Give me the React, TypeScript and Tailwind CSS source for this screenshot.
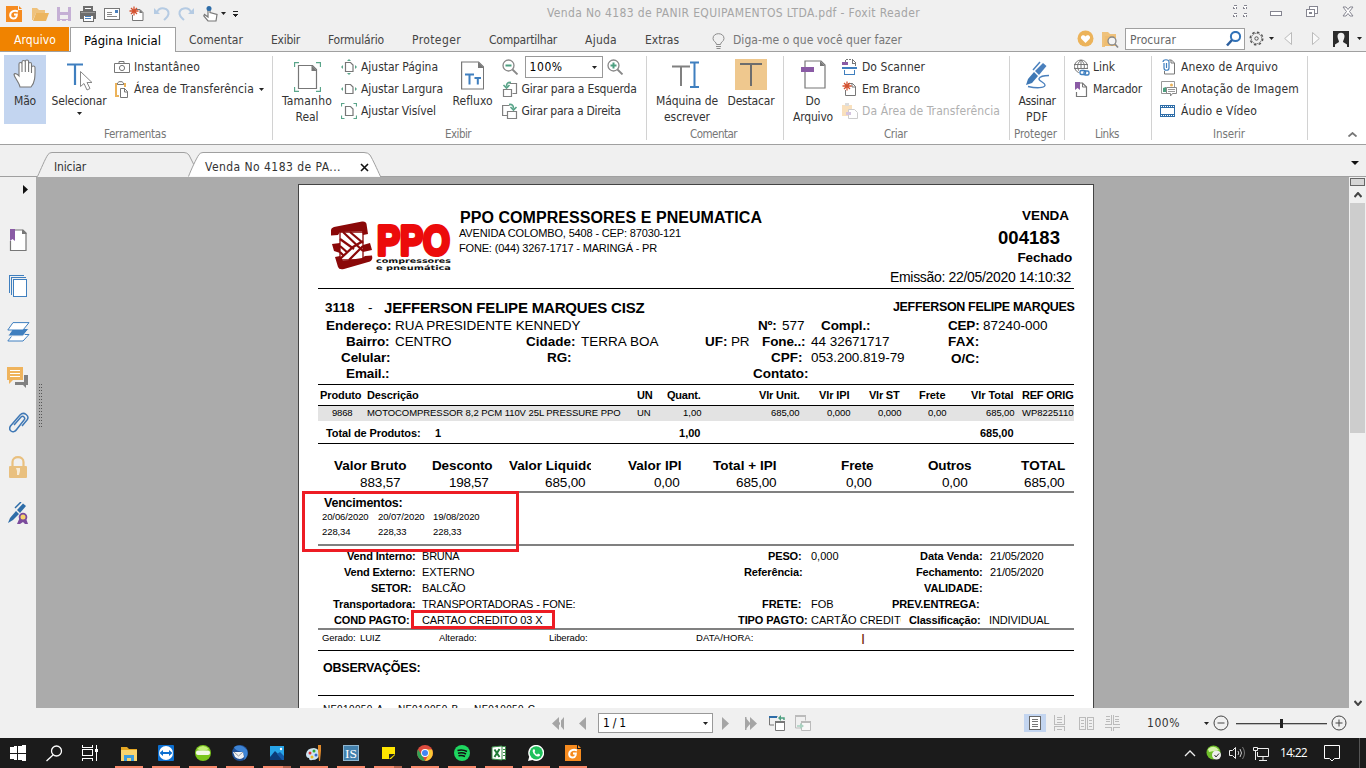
import { useLayoutEffect, useRef, useState, type ReactNode } from "react";

const UI = "font-['DejaVu_Sans_Condensed','Noto_Sans',sans-serif]";

/* Text whose tracking is adjusted so that it fills the given width. */
function T({ w, className = "", children }: { w: number; className?: string; children: string }) {
  const ref = useRef<HTMLSpanElement>(null);
  const [tracking, setTracking] = useState(0);
  useLayoutEffect(() => {
    if (ref.current && children.length > 1) {
      setTracking((w - ref.current.getBoundingClientRect().width) / children.length);
    }
  }, []);
  return (
    <span className={`block shrink-0 whitespace-pre ${className}`} style={{ width: w }}>
      <span ref={ref} style={{ letterSpacing: tracking }}>{children}</span>
    </span>
  );
}

type Field = [left: number, right: number, text: string, className?: string];

/* One printed line of the report; left and right are measured on the sheet. */
function Line({ className = "", fields }: { className?: string; fields: Field[] }) {
  let cursor = 0;
  return (
    <div className={`flex shrink-0 ${className}`}>
      {fields.map(([l, r, text, c = ""], i) => {
        const gap = l - cursor;
        cursor = r + 0.5;
        const clip = c.includes("overflow-hidden");
        return (
          <div key={i} className={`shrink-0 whitespace-pre ${c}`} style={{ marginLeft: gap, width: r - l + 0.5 }}>
            {clip ? text : <T w={r - l + 0.5}>{text}</T>}
          </div>
        );
      })}
    </div>
  );
}

const Rule = ({ className = "h-px bg-black" }: { className?: string }) => (
  <div className={`ml-[19px] w-[756px] shrink-0 ${className}`} />
);

function Svg({ w, h, className = "", children, crisp = false }: { w: number; h: number; className?: string; children: ReactNode; crisp?: boolean }) {
  return (
    <svg width={w} height={h} viewBox={`0 0 ${w} ${h}`} fill="none" className={`block shrink-0 ${className}`} shapeRendering={crisp ? "crispEdges" : undefined}>
      {children}
    </svg>
  );
}

const Caret = ({ className = "", c = "#222" }: { className?: string; c?: string }) => (
  <Svg w={5} h={3} className={className}><path d="M0 0h5L2.500 3z" fill={c} /></Svg>
);

const FoxitIcon = ({ className = "" }: { className?: string }) => (
  <Svg w={16} h={17} className={className}>
    <path d="M0 1h12v4h4v12H0z" fill="#f68b1f" />
    <path d="M13 1l3 3h-3z" fill="#f68b1f" />
    <path d="M12 6.500C8 4.500 4 7 4.200 10.500C4.500 14 9.500 14.500 10.500 11.500L10.800 9.500H8" stroke="#fff" strokeWidth="2" />
  </Svg>
);

const Star = ({ x, y }: { x: number; y: number }) => (
  <path transform={`translate(${x} ${y})`} d="M0-4.500V4.500M-4.500 0H4.500M-3-3L3 3M3-3L-3 3" stroke="#d4512f" strokeWidth="1.300" />
);

/* ---------- title bar ---------- */

function TitleBar() {
  return (
    <div className="flex h-[27px] shrink-0 items-center">
      <FoxitIcon className="ml-1.5" />
      <Svg w={17} h={16} className="ml-2.5">
        <path d="M0 2h5l2 2h6v3H4L1 14H0z" fill="#efc27c" /><path d="M4 7h13l-3 8H1z" fill="#ecb55f" />
      </Svg>
      <Svg w={14} h={14} className="ml-2" crisp>
        <path d="M0 0h14v14H0z" fill="#c5b0d5" /><path d="M3 0h8v5H3zM3 8h8v4H3z" fill="#f0f0f0" /><path d="M3 13h2v1H3zM9 13h2v1H9z" fill="#f0f0f0" />
      </Svg>
      <Svg w={16} h={16} className="ml-[9px]" crisp>
        <path d="M4 1h8v3H4z" fill="#fff" stroke="#6d6d6d" strokeWidth="2" /><path d="M0 5h16v8H0z" fill="#6d6d6d" /><path d="M1 6h14v1H1z" fill="#9a9a9a" /><path d="M3 9h10v6H3z" fill="#fff" stroke="#6d6d6d" /><path d="M5 10h6v1H5zM5 12h6v1H5z" fill="#4a80bd" />
      </Svg>
      <Svg w={16} h={12} className="ml-2" crisp>
        <path d="M.5.5h15v11H.5z" fill="#fff" stroke="#777" /><path d="M11 2h3v3h-3z" fill="#4a80bd" /><path d="M3 4.500h5M3 6.500h5M3 8.500h10" stroke="#888" />
      </Svg>
      <Svg w={15} h={16} className="ml-[9px]">
        <path d="M5 3.500h6l3 3v8H3.500V9" fill="#fff" stroke="#777" /><path d="M10.500 3v4H14z" fill="#777" /><Star x={5} y={5} />
      </Svg>
      <Svg w={16} h={15} className="ml-2.5">
        <path d="M3 6C6 0 15 2 14.500 8C14 11 12 12 10 14" stroke="#b5cbe3" strokeWidth="2" /><path d="M0 2v6h6z" fill="#b5cbe3" />
      </Svg>
      <Svg w={16} h={15} className="ml-2">
        <path d="M13 6C10 0 1 2 1.500 8C2 11 4 12 6 14" stroke="#b5cbe3" strokeWidth="2" /><path d="M16 2v6h-6z" fill="#b5cbe3" />
      </Svg>
      <Svg w={15} h={16} className="ml-[9px]">
        <path d="M5 11L1.500 8.500L.8 10L5 15h8l1-6.500l-7-2V3H5z" fill="#fff" stroke="#777" strokeWidth="1.200" /><circle cx="6" cy="2.500" r="2.500" fill="#2e6da8" />
      </Svg>
      <Caret className="ml-[3px]" />
      <Svg w={5} h={6} className="ml-[7px]" crisp><path d="M0 0h5v1H0zM0 3h5L2.500 6z" fill="#222" /></Svg>
      <T w={373} className="ml-[309px] text-xs leading-[27px] text-[#a5a5a5]">Venda No 4183 de PANIR EQUIPAMENTOS LTDA.pdf - Foxit Reader</T>
      <Svg w={14} h={14} className="ml-[313px] -mt-1" crisp>
        <g stroke="#858590"><path d="M.5.5h3v3h-3zM10.500.5h3v3h-3zM.5 8.500h3v3h-3zM10.500 8.500h3v3h-3z" fill="#fff" strokeDasharray="3 1" /></g>
      </Svg>
      <Svg w={12} h={5} className="ml-[23px]" crisp><path d="M.5.5h11v4H.5z" fill="#fff" stroke="#858590" /></Svg>
      <Svg w={12} h={12} className="ml-6 -mt-1" crisp>
        <path d="M3.500.5h8v7h-8z" fill="#fff" stroke="#858590" /><path d="M.5 3.500h8v7h-8zM3.500 6.500h2v1h-2z" fill="#fff" stroke="#858590" />
      </Svg>
      <Svg w={12} h={11} className="ml-6 -mt-1"><path d="M1 1h3l2 2.500L8 1h3L7.500 5.500L11 10H8L6 7.500L4 10H1l3.500-4.500z" fill="#fff" stroke="#858590" /></Svg>
    </div>
  );
}

function MenuBar() {
  const m = "text-xs leading-[27px] text-[#444]";
  return (
    <div className="flex h-[25px] shrink-0 border-b border-[#a0a0a0]">
      <div className="h-6 w-[69px] shrink-0 bg-[#f08300] pl-3.5">
        <T w={42} className="text-xs leading-[27px] text-white">Arquivo</T>
      </div>
      <div className="ml-px h-[25px] w-[106px] shrink-0 border border-b-0 border-[#a0a0a0] bg-white pl-[13px]">
        <T w={77} className="text-[13px] leading-[26px] text-black">Página Inicial</T>
      </div>
      <T w={54} className={`ml-[13px] ${m}`}>Comentar</T>
      <T w={29} className={`ml-7 ${m}`}>Exibir</T>
      <T w={56} className={`ml-7 ${m}`}>Formulário</T>
      <T w={49} className={`ml-7 ${m}`}>Proteger</T>
      <T w={68} className={`ml-7 ${m}`}>Compartilhar</T>
      <T w={32} className={`ml-7 ${m}`}>Ajuda</T>
      <T w={34} className={`ml-7 ${m}`}>Extras</T>
      <Svg w={13} h={16} className="ml-[33px] mt-[6px]">
        <path d="M4.500 11.500C4.500 9 1 8.500 1 5.500C1 2 4 .7 6.500.7S12 2 12 5.500C12 8.500 8.500 9 8.500 11.500zM4 13.500h5M4.500 15.500h4" stroke="#8c8c8c" />
      </Svg>
      <T w={169} className="ml-2 text-xs leading-[27px] text-[#777]">Diga-me o que você quer fazer</T>
      <Svg w={17} h={17} className="ml-[175px] mt-[3px]">
        <circle cx="8.500" cy="8.500" r="8" fill="#ecb35a" /><path d="M8.500 13L4.500 9C2.500 6 6.500 3.500 8.500 6.500C10.500 3.500 14.500 6 12.500 9z" fill="#fff" />
      </Svg>
      <Svg w={17} h={16} className="ml-2 mt-[5px]">
        <path d="M0 0h6l2 2h6v4H3v9H0z" fill="#efc27c" /><path d="M3 4h11v10H2z" fill="#efbd70" /><circle cx="10" cy="9" r="4" fill="#f4f4f4" stroke="#888" strokeWidth="1.300" /><path d="M13 12l3 3.500" stroke="#888" strokeWidth="1.600" />
      </Svg>
      <div className="ml-[6px] mt-px flex h-[22px] w-[120px] shrink-0 border border-[#a0a0a0] bg-white">
        <T w={46} className="ml-1 text-xs leading-[22px] text-[#666]">Procurar</T>
        <Svg w={16} h={16} className="ml-[50px] mt-[2px]">
          <circle cx="9.500" cy="5.500" r="4.600" stroke="#3273b8" strokeWidth="2" /><path d="M6 9L1 14.500" stroke="#2c5f9e" strokeWidth="2.600" />
        </Svg>
      </div>
      <Svg w={15} h={15} className="ml-1 mt-[4px]">
        <circle cx="7.500" cy="7.500" r="6.300" stroke="#555" strokeWidth="1.400" strokeDasharray="2.500 2.400" /><circle cx="7.500" cy="7.500" r="5.200" fill="#f0f0f0" stroke="#666" strokeDasharray="1.500 .5" /><circle cx="7.500" cy="7.500" r="1.700" stroke="#555" />
      </Svg>
      <Caret className="ml-[5px] mt-[10px]" />
      <Svg w={8} h={13} className="ml-2.5 mt-[5px]"><path d="M7.500.5v12L.7 6.500z" fill="#fafafa" stroke="#bbb" /></Svg>
      <Svg w={8} h={13} className="ml-5 mt-[5px]"><path d="M.5.5v12l6.800-6z" fill="#fafafa" stroke="#bbb" /></Svg>
      <Svg w={16} h={16} className="ml-[13px] mt-1">
        <path d="M0 0h16v16H0z" fill="#2b2b2b" /><path d="M4.500 5C4.500.5 11.500.5 11.500 5C11.500 8 10 9 10 11L14 13.500V16H2V13.500L6 11C6 9 4.500 8 4.500 5z" fill="#f0f0f0" />
      </Svg>
      <Caret className="ml-2 mt-[10px]" />
    </div>
  );
}

/* ---------- ribbon ---------- */

function Group({ className, label, lw, lc, children }: { className: string; label: string; lw: number; lc: string; children: ReactNode }) {
  return (
    <div className={`mt-1 flex h-[84px] shrink-0 flex-col border-r border-[#d2d2d2] ${className}`}>
      <div className="flex h-[70px] shrink-0">{children}</div>
      <T w={lw} className={`text-[11.500px] leading-[16px] text-[#777] ${lc}`}>{label}</T>
    </div>
  );
}

function Big({ className, icon, lines }: { className: string; icon: ReactNode; lines: [string, number][] }) {
  return (
    <div className={`flex shrink-0 flex-col items-center ${className}`}>
      <div className="flex h-[37px] shrink-0 items-center justify-center">{icon}</div>
      {lines.map(([t, w]) => <T key={t} w={w} className="text-xs leading-4 text-[#333]">{t}</T>)}
    </div>
  );
}

function Small({ icon, label, w, dim = false, caret = false }: { icon: ReactNode; label: string; w: number; dim?: boolean; caret?: boolean }) {
  return (
    <div className="flex h-[22px] shrink-0 items-center">
      <div className="flex w-5 shrink-0 items-center">{icon}</div>
      <T w={w} className={`text-xs leading-[22px] ${dim ? "text-[#b0b0b0]" : "text-[#333]"}`}>{label}</T>
      {caret && <Caret className="ml-[5px]" />}
    </div>
  );
}

const FitPage = ({ v, h, diag }: { v?: boolean; h?: boolean; diag?: boolean }) => (
  <Svg w={16} h={16}>
    <path d="M4.500 3.500h5l2.500 2.500v6.500H4.500z" fill="#fff" stroke="#777" strokeWidth="1.200" />
    {v && <path d="M6 2l2-2l2 2zM6 14l2 2l2-2z" fill="#5aa58a" />}
    {h && <path d="M2 6L0 8l2 2zM14 6l2 2l-2 2z" fill="#5aa58a" />}
    {diag && <path d="M.5 3.500v-3h3M12.500.5h3v3M.5 12.500v3h3M15.500 12.500v3h-3" stroke="#5aa58a" strokeWidth="1.200" />}
  </Svg>
);

const Magnifier = ({ plus }: { plus?: boolean }) => (
  <Svg w={17} h={16}>
    <circle cx="6.500" cy="6.500" r="5.500" stroke="#888" strokeWidth="1.300" /><path d="M10.500 10.500l5 5" stroke="#888" strokeWidth="1.800" />
    <path d="M3.500 6.500h6" stroke="#4d9f80" strokeWidth="2" />{plus && <path d="M6.500 3.500v6" stroke="#4d9f80" strokeWidth="2" />}
  </Svg>
);

const RotateLeft = () => (
  <Svg w={16} h={17}>
    <path d="M7.500 2.500h7v10h-4" stroke="#808080" strokeWidth="1.200" /><path d="M1.500 8.500h8v7h-8z" fill="#fff" stroke="#808080" strokeWidth="1.200" />
    <path d="M9 1.500C6 1 4.500 2.500 4.500 5.500M1.500 4L4.500 7L7.500 4" stroke="#5aa58a" strokeWidth="1.600" />
  </Svg>
);

const RotateRight = () => (
  <Svg w={16} h={17}>
    <path d="M5 12.500H.6V2.500h7" stroke="#808080" strokeWidth="1.200" /><path d="M5.500 8.500h9v7h-9z" fill="#fff" stroke="#808080" strokeWidth="1.200" />
    <path d="M7 1.500C10 1 11.500 2.500 11.500 5.500M8.500 4L11.500 7L14.500 4" stroke="#5aa58a" strokeWidth="1.600" />
  </Svg>
);

const PenIcon = () => (
  <Svg w={25} h={28}>
    <path d="M1 24L3 18L9 11L13 15L7 22z" fill="#3f78b5" /><path d="M10 10L18 2L21.500 5L14 14z" fill="#4a80bd" />
    <path d="M8 9L15 1" stroke="#4a80bd" strokeWidth="1.500" /><path d="M3 25.500C12 27.500 19 27 20 24.500C20.500 21.500 13 20 14 17.500C15 15.500 20 14.500 24 14.500" stroke="#4a80bd" strokeWidth="1.300" />
  </Svg>
);

function Ribbon() {
  return (
    <div className="flex h-[93px] shrink-0 border-b border-[#a0a0a0] bg-white">
      <Group className="w-[273px]" label="Ferramentas" lw={62} lc="ml-[104px]">
        <Big className="-mt-px ml-1 h-[69px] w-[42px] bg-[#c3d5f0] pt-px" lines={[["Mão", 22]]} icon={
          <Svg w={24} h={30} className="-mt-0.5">
            <path d="M7 28C6 23 1 18 1 15.500C1.500 14 4 14.500 6 17V5C6 3 9 3 9 5V13V3C9 1 12.300 1 12.300 3V13V2.500C12.300.5 15.600.5 15.600 2.500V13V5C15.600 3 18.500 3 18.500 5V14V8.500C18.500 6.500 22 6.500 22 8.500C22 16 22.500 23 18 28z" fill="#fff" stroke="#777" strokeWidth="1.100" />
          </Svg>} />
        <div className="flex w-[66px] shrink-0 flex-col items-center">
          <Big className="" lines={[["Selecionar", 55]]} icon={
            <Svg w={26} h={30} className="ml-px mt-1">
              <path d="M0 2.500h16M8 2v21" stroke="#3f7fbf" strokeWidth="2.200" /><path d="M13.500 9.500v15l3.500-3l3 6.500l3-1.500l-3-6h5z" fill="#fff" stroke="#888" />
            </Svg>} />
          <Caret className="mt-[3px]" />
        </div>
        <div className="ml-0.5 flex flex-col">
          <Small w={66} label="Instantâneo" icon={
            <Svg w={16} h={12}><path d="M.5 2.500h15v9H.5z" stroke="#777" /><path d="M5 2V.5h5V2" stroke="#777" /><circle cx="8" cy="7" r="2.600" stroke="#777" /></Svg>} />
          <Small w={120} caret label="Área de Transferência" icon={
            <Svg w={16} h={17}><path d="M5 15H2V3h9v3" stroke="#ecb35a" strokeWidth="2" /><path d="M3.500 3.500h6V2L8 .7H5L3.500 2z" fill="#fff" stroke="#777" /><path d="M6.500 7.500h4l3 3v6h-7z" fill="#fff" stroke="#777" /><path d="M10.500 7v4H14" stroke="#777" /></Svg>} />
        </div>
      </Group>
      <Group className="w-[374px]" label="Exibir" lw={26} lc="ml-[172px]">
        <Big className="w-[68px]" lines={[["Tamanho", 50], ["Real", 23]]} icon={
          <Svg w={27} h={30} className="mt-1">
            <path d="M4.500 3.500h14l4 4v19h-18z" stroke="#777" strokeWidth="1.200" /><path d="M17.500 3v6H23z" fill="#777" /><path d="M.5 5V.5H5M22 .5h4.500V5M.5 25v4.500H5M22 29.500h4.500V25" stroke="#5aa58a" strokeWidth="1.300" />
          </Svg>} />
        <div className="-ml-0.5 flex w-[106px] flex-col pl-[2px]">
          <Small w={77} label="Ajustar Página" icon={<FitPage v h />} />
          <Small w={82} label="Ajustar Largura" icon={<FitPage h />} />
          <Small w={75} label="Ajustar Visível" icon={<FitPage diag />} />
        </div>
        <Big className="ml-2 w-10" lines={[["Refluxo", 40]]} icon={
          <Svg w={23} h={29} className="mt-0.5">
            <path d="M.6 1h17l5 5v22H.6z" stroke="#777" strokeWidth="1.200" /><path d="M17 1v6h6z" fill="#777" /><path d="M4 13.500h9M8.500 13.500v10M13.500 17h6.500M16.800 17v6.500" stroke="#3f7fbf" strokeWidth="2" />
          </Svg>} />
        <div className="ml-[9px] flex w-[145px] flex-col">
          <div className="flex h-[22px] shrink-0 items-center">
            <Magnifier />
            <div className="ml-[6px] flex h-[22px] w-[78px] shrink-0 items-center border border-[#999] bg-white">
              <T w={33} className="ml-1 text-xs text-black">100%</T><Caret className="ml-[29px]" />
            </div>
            <div className="ml-1"><Magnifier plus /></div>
          </div>
          <Small w={115} label="Girar para a Esquerda" icon={<RotateLeft />} />
          <Small w={99} label="Girar para a Direita" icon={<RotateRight />} />
        </div>
      </Group>
      <Group className="w-[137px]" label="Comentar" lw={47} lc="ml-[43px]">
        <Big className="ml-[9px] w-[62px]" lines={[["Máquina de", 62], ["escrever", 46]]} icon={
          <Svg w={30} h={28}><path d="M0 5.500h18M9 5v20" stroke="#808080" strokeWidth="2" /><path d="M18 1.500h9M18 26h9M22.500 2v24" stroke="#3f7fbf" strokeWidth="2" /></Svg>} />
        <Big className="ml-[8px] w-[50px]" lines={[["Destacar", 47]]} icon={
          <Svg w={32} h={31}><path d="M0 0h32v31H0z" fill="#efc88e" /><path d="M5 5h22M16 5v22" stroke="#6d6d6d" strokeWidth="2" /></Svg>} />
      </Group>
      <Group className="w-[226px]" label="Criar" lw={23} lc="ml-[100px]">
        <Big className="ml-2 w-[42px]" lines={[["Do", 15], ["Arquivo", 40]]} icon={
          <Svg w={26} h={29} className="-ml-px"><path d="M5 1h16l4 4v23H5z" stroke="#777" strokeWidth="1.200" /><path d="M20 1v5h5z" fill="#777" /><path d="M1 7h13v5H1z" fill="#8a5ba5" /></Svg>} />
        <div className="ml-[8px] flex flex-col">
          <Small w={63} label="Do Scanner" icon={
            <Svg w={15} h={16} crisp><path d="M3.500 3V.5H10.500L13.500 3.500V8" stroke="#777" strokeDasharray="2 1" /><path d="M10 0v4h4" stroke="#777" /><path d="M0 3h6v3H0z" fill="#8a5ba5" /><path d="M0 9h15" stroke="#3f7fbf" strokeWidth="2" /><path d="M2.500 11v4.500h10V11" stroke="#3f7fbf" /></Svg>} />
          <Small w={58} label="Em Branco" icon={
            <Svg w={15} h={16}><path d="M6 2.500h4.500l3 3v9H3.500V9" stroke="#777" /><path d="M10 2v4h4" stroke="#777" /><Star x={5} y={5} /></Svg>} />
          <Small w={138} dim label="Da Área de Transferência" icon={
            <Svg w={17} h={17}><path d="M0 2h10v11H0z" fill="#f9e0bd" /><path d="M3 0h4v3H3z" fill="#ddd" /><path d="M6.500 6.500h6l3 3v6h-9z" fill="#fff" stroke="#ccc" /><path d="M4 9h5v3H4z" fill="#d5c4df" /></Svg>} />
        </div>
      </Group>
      <Group className="w-[55px]" label="Proteger" lw={43} lc="ml-1">
        <Big className="w-[54px]" lines={[["Assinar", 37], ["PDF", 22]]} icon={<PenIcon />} />
      </Group>
      <Group className="w-[87px]" label="Links" lw={24} lc="ml-[30px]">
        <div className="ml-[8px] flex flex-col">
          <Small w={22} label="Link" icon={
            <Svg w={17} h={17}><circle cx="8" cy="7.500" r="6.500" stroke="#777" /><path d="M1 5.500h14M1 9.500h14M8 1v13M8 1C3 5 4 11 8 14M8 1C13 5 12 11 8 14" stroke="#777" /><path d="M6 10h11v7H6z" fill="#fff" /><rect x="7" y="11.500" width="5.500" height="4" rx="1.500" stroke="#3f7fbf" strokeWidth="1.400" /><rect x="11" y="12" width="5" height="4" rx="1.500" stroke="#3f7fbf" strokeWidth="1.400" /></Svg>} />
          <Small w={49} label="Marcador" icon={
            <Svg w={15} h={15} className="ml-0.5"><path d="M1.500 10v4.500h10V5l-4-4H5" stroke="#777" strokeWidth="1.200" /><path d="M7.500 1v4h4" stroke="#777" /><path d="M0 0h5v8L2.500 6L0 8z" fill="#8a5ba5" /></Svg>} />
        </div>
      </Group>
      <Group className="w-[156px]" label="Inserir" lw={32} lc="ml-[61px]">
        <div className="ml-[9px] flex flex-col">
          <Small w={97} label="Anexo de Arquivo" icon={
            <Svg w={15} h={16}><path d="M8 1h2.500l3 3v11H3.500V12" stroke="#777" /><path d="M10 1v3h3" stroke="#777" /><path d="M3 4v5c0 3 5 3 5 0V3c0-3-6-3-6 0M5.500 4v5" stroke="#3f7fbf" strokeWidth="1.200" /></Svg>} />
          <Small w={118} label="Anotação de Imagem" icon={
            <Svg w={16} h={16}><path d="M.5.5h13v12H.5z" stroke="#999" /><path d="M2 11V7l3-1v5z" fill="#4d9f80" /><circle cx="10.500" cy="4" r="1.500" fill="#ecb35a" /><path d="M5.500 6.500h10v6h-4l-2 2.500v-2.500h-4z" fill="#fff" stroke="#888" /><path d="M7 8.500h7M7 10.500h7" stroke="#999" /></Svg>} />
          <Small w={76} label="Áudio e Vídeo" icon={
            <Svg w={15} h={12} crisp className="-ml-px"><path d="M0 0h15v12H0z" fill="#2e6da8" /><path d="M1 3h13v6H1z" fill="#fff" /><path d="M1 1.500h13M1 10.500h13" stroke="#fff" strokeDasharray="1 1" /></Svg>} />
        </div>
      </Group>
      <Svg w={9} h={5} className="ml-[40px] mt-20"><path d="M.5 4.500l4-3.500l4 3.500" stroke="#777" strokeWidth="1.800" /></Svg>
    </div>
  );
}

function TabStrip() {
  return (
    <div className="relative flex h-8 shrink-0">
      <Svg w={1366} h={32} className="absolute inset-0">
        <path d="M0 31.500H37.500C41 24 45 14 48 9.500Q49.500 7.500 52 7.500H184Q187 7.500 189 10L194 20" stroke="#a0a0a0" />
        <path d="M188.500 31.500C191 25 196 14 199 9.500Q200.500 7.500 203 7.500H364Q368 7.500 370 10C373 15 377 24 380.500 31.500" fill="#fff" stroke="#a0a0a0" /><path d="M380 31.500H1366" stroke="#a0a0a0" />
      </Svg>
      <T w={32} className="relative ml-[54px] text-xs leading-[44px] text-[#333]">Iniciar</T>
      <T w={136} className="relative ml-[119px] text-xs leading-[44px] text-[#333]">Venda No 4183 de PA...</T>
      <Svg w={9} h={9} className="relative ml-[19px] mt-[18px]"><path d="M1 1l7 7M8 1L1 8" stroke="#111" strokeWidth="1.600" /></Svg>
      <Svg w={8} h={4} className="relative ml-[982px] mt-[16px]"><path d="M0 0h8l-4 4z" fill="#111" /></Svg>
    </div>
  );
}

function SideBar() {
  return (
    <div className="flex w-9 shrink-0 flex-col bg-[#f0f0f0]">
      <Svg w={5} h={9} className="ml-[23px] mt-2"><path d="M0 0l5 4.500L0 9z" fill="#111" /></Svg>
      <Svg w={18} h={22} className="ml-[9px] mt-[35px]">
        <path d="M6 1h8l3 3v17.500H1.500V12" fill="#fff" stroke="#777" strokeWidth="1.200" /><path d="M13 .5V5h5z" fill="#777" /><path d="M1 0h5v12l-2.500-2L1 12z" fill="#8a5ba5" />
      </Svg>
      <Svg w={19} h={22} className="ml-[9px] mt-6" crisp>
        <path d="M.5 18V.5H15M2.500 20V2.500H17" stroke="#3f7fbf" /><path d="M4.500 4.500h13v17h-13z" fill="#fff" stroke="#3f7fbf" />
      </Svg>
      <Svg w={23} h={20} className="ml-[7px] mt-[25px]">
        <path d="M6 12.500h16l-6 6.500H.8z" fill="#fff" stroke="#3f7fbf" /><path d="M6 6.500h16l-6 7.500H.8z" fill="#3f7fbf" stroke="#f0f0f0" /><path d="M6 .6h16l-6 7.400H.8z" fill="#fff" stroke="#3f7fbf" />
      </Svg>
      <Svg w={21} h={21} className="ml-[7px] mt-[25px]">
        <path d="M17 8h4v10h-2v3l-3-3H8v-3h9z" fill="#808080" /><path d="M0 0h16v13H6l-4 4v-4H0z" fill="#efb35c" /><path d="M3 3.500h10M3 6.500h10M3 9.500h10" stroke="#fff" />
      </Svg>
      <Svg w={20} h={22} className="ml-[9px] mt-6">
        <path d="M5 13L12 5C14 3 17 6 15 8L8 17C4 23-1 18 1.500 14L11 3C15-1 21 4 18 8L13 14" stroke="#3f78b5" strokeWidth="1.500" />
      </Svg>
      <Svg w={18} h={22} className="ml-[9px] mt-[22px]">
        <path d="M3.500 11V6C3.500-.5 14.500-.5 14.500 6V11" stroke="#e9c07f" strokeWidth="2.200" /><rect y="10" width="18" height="12" rx="1" fill="#e9c07f" /><path d="M7 12h4v3l-1 4H8v-4z" fill="#f8ecd8" />
      </Svg>
      <Svg w={21} h={23} className="ml-[8px] mt-6">
        <path d="M0 21l2-5L8 9l3 3l-6 6z" fill="#2e6da8" /><path d="M9 8l6-6.500L18 4l-6 7z" fill="#2e6da8" /><path d="M7 6l6-6" stroke="#2e6da8" strokeWidth="1.500" /><path d="M12 15l-3 7h3l3-2l2 2h3l-2.500-7z" fill="#7b4b9c" /><circle cx="15" cy="15" r="4.300" fill="#7b4b9c" /><circle cx="15" cy="15" r="2.500" fill="#f7d36b" />
      </Svg>
    </div>
  );
}

/* ---------- report sheet ---------- */

const Logo = () => (
  <Svg w={122} h={51} className="ml-[31px] mt-9">
    <path d="M1 9Q1 7 4 6L32 .5Q36 0 36.500 3L38 13L33 14L32 10L10 11L8 14L1 14.500z" fill="#8a0808" />
    <path d="M2 23L10 22V32L4 30zM33 24L40 22L42 29L33 31z" fill="#8a0808" />
    <path d="M5 36L10 35L13 40L32 37L35 35L42 34.500Q43 39 40 40.500L14 48Q9 49 8 46z" fill="#8a0808" />
    <path d="M10 11h23v28H10z" stroke="#8a0808" strokeWidth="1.300" />
    <path d="M13 11L33 30M20 11L33 22M10 18L24 28M10 25L18 32M10 38L23 26L33 20M19 39L33 25M10 31L13 34" stroke="#8a0808" strokeWidth="2.200" />
    <text x="47" y="33.500" fontSize="42" fontWeight="700" textLength="73" lengthAdjust="spacingAndGlyphs" fontFamily="Liberation Sans, sans-serif" fill="#ec0b0b" stroke="#ec0b0b" strokeWidth="4" strokeLinejoin="round">PPO</text>
    <text x="46" y="42" fontSize="6.500" fontWeight="700" textLength="75" lengthAdjust="spacingAndGlyphs" fontFamily="DejaVu Sans, sans-serif" fill="#111">compressores</text>
    <text x="46" y="49" fontSize="6.500" fontWeight="700" textLength="75" lengthAdjust="spacingAndGlyphs" fontFamily="DejaVu Sans, sans-serif" fill="#111">e pneumática</text>
  </Svg>
);

const B = "font-bold";
const CLIP = "overflow-hidden";

function Sheet() {
  return (
    <div className="relative ml-[262px] mt-[7px] h-[600px] w-[796px] shrink-0 border border-[#444] bg-white font-['Liberation_Sans',Arial,sans-serif] text-black">
      <div className="flex h-full flex-col [&>*]:shrink-0">
        <div className="flex h-[103px]">
          <Logo />
          <div className="ml-2 flex w-[420px] flex-col">
            <T w={302} className="mt-[23px] text-base font-bold leading-5">PPO COMPRESSORES E PNEUMATICA</T>
            <T w={222} className="-ml-px -mt-0.5 text-[11px] leading-[15px]">AVENIDA COLOMBO, 5408 - CEP: 87030-121</T>
            <T w={198} className="-ml-px text-[11px] leading-[15px]">FONE: (044) 3267-1717 - MARINGÁ - PR</T>
          </div>
          <div className="flex w-[191px] flex-col items-end">
            <T w={47} className="mr-0.5 mt-[21px] text-[13.500px] font-bold leading-5">VENDA</T>
            <T w={62} className="mr-[11px] mt-0.5 text-[18.500px] font-bold leading-5">004183</T>
            <T w={54.5} className="mr-[-1px] text-[13.500px] font-bold leading-5">Fechado</T>
            <T w={181} className="text-sm leading-[19px]">Emissão: 22/05/2020 14:10:32</T>
          </div>
        </div>
        <Rule />
        <div className="-ml-[299px] flex flex-col pt-2.5 text-[13.500px] leading-4">
          <Line className="mb-0.5 h-[17px] leading-[17px]" fields={[[325, 354, "3118", B], [368, 373, "-"], [384, 644, "JEFFERSON FELIPE MARQUES CISZ", "font-bold text-[15px]"], [893, 1074, "JEFFERSON FELIPE MARQUES", "font-bold text-[12.500px]"]]} />
          <Line className="h-4" fields={[[326, 391, "Endereço:", B], [395, 580, "RUA PRESIDENTE KENNEDY"], [758, 776, "Nº:", B], [782, 804, "577"], [821, 870, "Compl.:", B], [948, 979, "CEP:", B], [983, 1047, "87240-000"]]} />
          <Line className="h-4" fields={[[346, 389, "Bairro:", B], [395, 451, "CENTRO"], [526, 575, "Cidade:", B], [581, 658, "TERRA BOA"], [705, 727, "UF:", B], [731, 749, "PR"], [762, 805, "Fone..:", B], [811, 889, "44 32671717"], [948, 979, "FAX:", B]]} />
          <Line className="h-4" fields={[[341, 390, "Celular:", B], [547, 571, "RG:", B], [771, 802, "CPF:", B], [811, 904, "053.200.819-79"], [951, 979, "O/C:", "font-bold leading-[18px]"]]} />
          <Line className="h-4" fields={[[346, 389, "Email.:", B], [753, 808, "Contato:", B]]} />
        </div>
        <Rule className="mt-0.5 h-px bg-black" />
        <Line className="-ml-[299px] h-5 text-[11px] font-bold leading-[21px]" fields={[[320, 361, "Produto"], [367, 418, "Descrição"], [637, 652, "UN"], [667, 700, "Quant."], [759, 799, "Vlr Unit."], [819, 849, "Vlr IPI"], [869, 899, "Vlr ST"], [919, 945, "Frete"], [971, 1013, "Vlr Total"], [1022, 1073, "REF ORIG"]]} />
        <Rule />
        <div className="ml-[19px] h-[15px] w-[756px] bg-[#e3e3e3]">
          <Line className="-ml-[318px] h-[15px] text-[9.500px] leading-[14px]" fields={[[332, 352, "9868"], [367, 620, "MOTOCOMPRESSOR 8,2 PCM 110V 25L PRESSURE PPO"], [637, 650, "UN"], [683, 701, "1,00"], [771, 799, "685,00"], [827, 850, "0,000"], [878, 901, "0,000"], [928, 946, "0,00"], [986, 1014, "685,00"], [1022, 1073, "WP8225110"]]} />
        </div>
        <Line className="-ml-[299px] h-[22px] text-[11px] font-bold leading-[24px]" fields={[[326, 420, "Total de Produtos:"], [435, 440, "1"], [679, 700, "1,00"], [980, 1013, "685,00"]]} />
        <Rule />
        <Line className="-ml-[299px] mt-[13px] h-[17px] text-[13.500px] font-bold leading-[17px]" fields={[[334, 406, "Valor Bruto"], [432, 492, "Desconto"], [509, 590, "Valor Liquido", CLIP], [628, 681, "Valor IPI"], [713, 776, "Total + IPI"], [841, 873, "Frete"], [928, 971, "Outros"], [1021, 1065, "TOTAL"]]} />
        <Line className="-ml-[299px] h-[17px] text-[13.500px] leading-[17px]" fields={[[360, 400, "883,57"], [449, 488, "198,57"], [545, 585, "685,00"], [654, 679, "0,00"], [736, 776, "685,00"], [846, 871, "0,00"], [942, 967, "0,00"], [1024, 1064, "685,00"]]} />
        <Rule className="h-0.5 bg-[#808080]" />
        <Line className="-ml-[299px] mt-[3px] h-[14px] text-[12.500px] font-bold leading-[14px]" fields={[[324, 402, "Vencimentos:"]]} />
        <Line className="-ml-[299px] h-[14px] text-[9.500px] leading-[14px]" fields={[[322, 368, "20/06/2020"], [378, 424, "20/07/2020"], [433, 479, "19/08/2020"]]} />
        <Line className="-ml-[299px] h-[20px] text-[9.500px] leading-[16px]" fields={[[322, 350, "228,34"], [378, 406, "228,33"], [433, 461, "228,33"]]} />
        <Rule className="h-0.5 bg-[#808080]" />
        <div className="-ml-[299px] flex flex-col pt-0.5 text-[11px] leading-4">
          <Line fields={[[347, 415, "Vend Interno:", B], [422, 459, "BRUNA"], [768, 801, "PESO:", B], [811, 838, "0,000"], [920, 982, "Data Venda:", B], [990, 1043, "21/05/2020"]]} />
          <Line fields={[[344, 415, "Vend Externo:", B], [422, 474, "EXTERNO"], [744, 802, "Referência:", B], [916, 982, "Fechamento:", B], [990, 1043, "21/05/2020"]]} />
          <Line fields={[[371, 411, "SETOR:", B], [422, 465, "BALCÃO"], [924, 982, "VALIDADE:", B]]} />
          <Line fields={[[333, 415, "Transportadora:", B], [422, 575, "TRANSPORTADORAS - FONE:"], [762, 801, "FRETE:", B], [811, 833, "FOB"], [892, 979, "PREV.ENTREGA:", B]]} />
          <Line fields={[[334, 409, "COND PAGTO:", B], [422, 542, "CARTAO CREDITO 03 X"], [738, 807, "TIPO PAGTO:", B], [811, 900, "CARTÃO CREDITO", CLIP], [909, 980, "Classificação:", B], [989, 1049, "INDIVIDUAL"]]} />
        </div>
        <Rule className="h-0.5 bg-[#808080]" />
        <Line className="-ml-[299px] h-5 text-[9.500px] leading-[16px]" fields={[[322, 355, "Gerado:"], [360, 380, "LUIZ"], [439, 476, "Alterado:"], [549, 587, "Liberado:"], [696, 753, "DATA/HORA:"], [861.5, 864, "|", "font-bold text-[#7a2c10] text-[11px]"]]} />
        <Rule />
        <Line className="-ml-[299px] h-11 text-[12.500px] font-bold leading-[34px]" fields={[[323, 420, "OBSERVAÇÕES:"]]} />
        <Rule />
        <Line className="-ml-[299px] text-[10px] leading-[27px]" fields={[[323, 383, "NF010050-A"], [398, 458, "NF010050-B"], [474, 535, "NF010050-C"]]} />
      </div>
      <div className="absolute left-[3px] top-[306px] h-[61px] w-[217px] border-[3px] border-[#ed1c24]" />
      <div className="absolute left-[112px] top-[425px] h-[19px] w-[144px] border-[3px] border-[#ed1c24]" />
    </div>
  );
}

function Workspace() {
  return (
    <div className="flex h-[531px] shrink-0 overflow-hidden">
      <SideBar />
      <div className="relative flex w-[1313px] shrink-0 items-start bg-[#ababab]">
        <Sheet />
        <Svg w={3} h={44} className="absolute left-[3px] top-[207px]" crisp>
          <path d="M.5 0v44M2.500 0v44" stroke="#555" strokeDasharray="1 2" />
        </Svg>
      </div>
      <div className="flex w-[17px] shrink-0 flex-col items-center bg-[#f0f0f0]">
        <div className="mt-px h-2 w-[15px] shrink-0 border border-[#666] bg-[#d6d6d6]" />
        <Svg w={8} h={6} className="mt-1.5"><path d="M.5 5l3.500-4l3.500 4" stroke="#444" strokeWidth="2" /></Svg>
        <div className="mt-[5px] h-[230px] w-[15px] shrink-0 bg-[#cdcdcd]" />
        <Svg w={8} h={6} className="mb-0.5 mt-auto"><path d="M.5 1l3.500 4l3.500-4" stroke="#444" strokeWidth="2" /></Svg>
      </div>
    </div>
  );
}

function StatusBar() {
  const g = "#a5a5a5";
  return (
    <div className="flex h-[30px] shrink-0 items-center">
      <Svg w={13} h={13} className="ml-[552px]"><path d="M7 0v13L0 6.500z" fill={g} /><path d="M12 0v13L6.500 6.500z" fill={g} /><path d="M8.500 0v13" stroke="#f0f0f0" /></Svg>
      <Svg w={7} h={13} className="ml-[14px]"><path d="M7 0v13L0 6.500z" fill={g} /></Svg>
      <div className="ml-3 flex h-5 w-[115px] shrink-0 items-center border border-[#999] bg-white">
        <T w={23} className="ml-1 text-xs text-black">1 / 1</T><Caret className="ml-[77px]" />
      </div>
      <Svg w={7} h={13} className="ml-[9px]"><path d="M0 0v13l7-6.500z" fill={g} /></Svg>
      <Svg w={12} h={13} className="ml-4"><path d="M0 0v13l5.500-6.500z" fill={g} /><path d="M5 0v13l7-6.500z" fill={g} /><path d="M0 0h1.500v13H0z" fill={g} /></Svg>
      <Svg w={17} h={16} className="ml-3">
        <path d="M5 10H.5V1.500h8" stroke="#777" /><path d="M0 1h8v2H0z" fill="#2e6da8" /><path d="M6.500 6.500h9v9h-9z" fill="#fff" stroke="#777" /><path d="M6 6h10v2H6z" fill="#777" /><path d="M15 5V3h-4" stroke="#4d9f80" strokeWidth="1.500" /><path d="M9 3l3-3v6z" fill="#4d9f80" />
      </Svg>
      <Svg w={17} h={16} className="ml-[9px]">
        <path d="M5 13H.5V.5h10v5" stroke="#bbb" /><path d="M0 0h11v2H0z" fill="#bbb" /><path d="M6.500 6.500h9v9h-9z" fill="#f8f8f8" stroke="#bbb" /><path d="M6 6h10v2H6z" fill="#bbb" /><path d="M2 11h4" stroke="#a9d1c0" strokeWidth="1.500" /><path d="M5 8l4 3l-4 3z" fill="#a9d1c0" />
      </Svg>
      <div className="ml-[212px] flex h-[18px] w-[22px] shrink-0 items-center justify-center bg-[#c3d5f0]">
        <Svg w={12} h={14} crisp><path d="M.5.5h11v13H.5z" fill="#fff" stroke="#666" /><path d="M3 3.500h6M3 5.500h6M3 8.500h6M3 10.500h6" stroke="#777" /></Svg>
      </div>
      <Svg w={11} h={16} className="ml-2" crisp><path d="M.5 0v9.500h10V0M.5 16v-4.500h10V16" stroke="#bbb" /><path d="M3 2.500h5M3 4.500h5M3 7.500h5M3 14.500h5" stroke="#bbb" /></Svg>
      <Svg w={15} h={13} className="ml-[14px]" crisp><path d="M.5.5h6v12h-6zM8.500.5h6v12h-6z" stroke="#bbb" /><path d="M2 3.500h3M2 6.500h3M2 9.500h3M10 3.500h3M10 6.500h3M10 9.500h3" stroke="#bbb" /></Svg>
      <Svg w={15} h={16} className="ml-[11px]" crisp><path d="M0 9.500h6.500V0M15 9.500H8.500V0M0 12.500h6.500V16M15 12.500H8.500V16" stroke="#bbb" /><path d="M1 1.500h4M1 4.500h4M1 6.500h4M10 1.500h4M10 4.500h4M10 6.500h4" stroke="#bbb" /></Svg>
      <T w={33} className="ml-[27px] text-xs text-[#333]">100%</T>
      <Caret className="ml-[24px]" />
      <Svg w={16} h={16} className="ml-[4px]"><circle cx="8" cy="8" r="7" stroke="#444" /><path d="M4.500 8h7" stroke="#444" /></Svg>
      <Svg w={91} h={9} className="ml-[7px]" crisp><path d="M0 4h91v1H0z" fill="#444" /><path d="M0 5h91v1H0z" fill="#bbb" /><path d="M44 0h3v9h-3z" fill="#222" /></Svg>
      <Svg w={16} h={16} className="ml-1"><circle cx="8" cy="8" r="7" stroke="#444" /><path d="M4.500 8h7M8 4.500v7" stroke="#444" /></Svg>
    </div>
  );
}

/* ---------- taskbar ---------- */

type TaskApp = { icon: ReactNode; stacked?: boolean };

const apps: TaskApp[] = [
  { icon: <><path d="M0 2h6l2 2h8v12H0z" fill="#e6a824" /><path d="M0 5h16v11H0z" fill="#f9d56e" /><path d="M3 10h10v6h-3v-3H6v3H3z" fill="#3d9ddd" /></> },
  { icon: <><rect width="16" height="16" rx="1" fill="#0c6fd0" /><circle cx="8" cy="8" r="7" fill="#fff" /><path d="M1.500 8L5 5v2h6V5l3.500 3L11 11V9H5v2z" fill="#0c6fd0" /></> },
  { icon: <><circle cx="8" cy="8" r="8" fill="#7ac51c" /><path d="M2 4Q8-2 14 4Q8 7 2 4z" fill="#c3ee7a" /><rect x="1" y="5.500" width="14" height="4.500" rx="2" fill="#f2f7e8" /></> },
  { icon: <><circle cx="8" cy="8" r="8" fill="#1f4f94" /><path d="M2 2Q9-2 15 5Q17 11 12 15Q14 8 7 6Q3 5 2 2z" fill="#3e84d4" /><path d="M1 7L11 7L12 12Q8 16 3 12z" fill="#f0f2f5" /><path d="M2 7l4.500 4l4.500-4" stroke="#999" /></> },
  { stacked: true, icon: <><path d="M1 1h14v14H1z" fill="#27a4e8" /><path d="M1 12L6 6l9 9H1z" fill="#0b3a78" /><path d="M8 9l3-2l4 4v4h-2z" fill="#135aa8" /><circle cx="12" cy="4" r="1.200" fill="#fff" /></> },
  { icon: <><path d="M0 9Q1 3 8 3Q14 4 13 9Q13 15 6 15Q3 16 3 13Q0 13 0 9z" fill="#cde4f2" /><circle cx="4" cy="8" r="1.500" fill="#d33" /><circle cx="8" cy="6" r="1.500" fill="#3a3" /><circle cx="10" cy="10" r="1.500" fill="#36c" /><circle cx="6" cy="12" r="1.500" fill="#eb2" /><path d="M12 0h3v6l-1 10h-1l-1-10z" fill="#e08a2c" /></> },
  { icon: <><rect x=".5" y=".5" width="15" height="15" fill="#4381ad" stroke="#8fb5cf" /><text x="2" y="13" fontSize="13" textLength="12" lengthAdjust="spacingAndGlyphs" fontFamily="Liberation Serif, serif" fill="#fff">IS</text></> },
  { stacked: true, icon: <><path d="M2 2h13v8l-4 4H2z" fill="#ffe600" /><path d="M9 14V9h6z" fill="#222" /></> },
  { icon: <><circle cx="8" cy="8" r="8" fill="#dd4b3e" /><path d="M1 4.500L6 12L8 16A8 8 0 0 1 1 4.500z" fill="#2fa455" /><path d="M8 16A8 8 0 0 0 15 4.500H8L11.500 10z" fill="#fcc934" /><circle cx="8" cy="8" r="3.900" fill="#fff" /><circle cx="8" cy="8" r="3" fill="#4285f4" /></> },
  { icon: <><circle cx="8" cy="8" r="8" fill="#1ed760" /><path d="M3.500 5.500Q8.500 4 13 6.500M4 8.200Q8.500 7 12 9M4.500 10.800Q8 9.800 11 11.500" stroke="#111" strokeWidth="1.500" /></> },
  { icon: <><path d="M4 1.500h10.500v13H4z" fill="#fff" stroke="#3b8a48" /><path d="M1 2L11 1v14L1 14z" fill="#fff" stroke="#3b8a48" /><path d="M3.500 4.500l5 7.500M8.500 4L3.500 12" stroke="#1f7a36" strokeWidth="2" /><path d="M12 4.500h2M12 7.500h2M12 10.500h2" stroke="#3b8a48" /></> },
  { icon: <><path d="M0 16l1.200-4.200A8 8 0 1 1 4.500 15z" fill="#fff" /><circle cx="8.200" cy="7.800" r="6.600" fill="#1fc15b" /><path d="M5 4.500Q4 6 5.500 8.500Q8 12 10.500 11.500Q12.500 11 12 9.500L10 8.500L9 9.700Q7.500 9 6.500 7L7.200 6L6.500 4.200z" fill="#fff" /></> },
  { icon: <><path d="M0 0h12v4h4v12H0z" fill="#f68b1f" /><path d="M13 0l3 3h-3z" fill="#f68b1f" /><path d="M12 5.500C8 3.500 4 6 4.200 9.500C4.500 13 9.500 13.500 10.500 10.500L10.800 8.500H8" stroke="#fff" strokeWidth="2" /></> },
];

function TaskBar() {
  return (
    <div className="flex h-[30px] shrink-0 bg-[#1b1b1b]">
      <Svg w={16} h={16} className="ml-2.5 mt-[7px]" crisp><path d="M0 2l7-1v7H0zM8 1l8-1v8H8zM0 9h7v6l-7-1zM8 9h8v7l-8-1z" fill="#fff" /></Svg>
      <Svg w={17} h={17} className="ml-5 mt-[7px]"><circle cx="10.500" cy="6" r="5" stroke="#fff" strokeWidth="1.300" /><path d="M7 10L.5 16" stroke="#fff" strokeWidth="1.300" /></Svg>
      <Svg w={17} h={16} className="ml-[19px] mt-[7px]" crisp><path d="M.5 0v2.500h10V0M.5 16v-2.500h10V16M.5 4.500h10v6H.5zM14.500 0v16" stroke="#fff" /><path d="M13 4h3v3h-3z" fill="#fff" /></Svg>
      <div className="ml-[16px] flex gap-[9px]">
        {apps.map(({ icon, stacked }, i) => (
          <div key={i} className="flex w-7 flex-col items-center justify-between pt-[7px]">
            <Svg w={16} h={16}>{icon}</Svg>
            <div className="flex h-0.5 w-full justify-end bg-[#f98a6c]">
              {stacked && <div className="w-2 bg-[#b9664f]" />}
            </div>
          </div>
        ))}
      </div>
      <Svg w={12} h={7} className="ml-[597px] mt-3"><path d="M1 6l5-5l5 5" stroke="#eee" strokeWidth="1.300" /></Svg>
      <Svg w={16} h={16} className="ml-2.5 mt-[7px]"><circle cx="7.500" cy="7.500" r="7" fill="#6fc02a" /><path d="M2 4Q8-1 13 5L3 7z" fill="#d7f3ab" /><circle cx="10.500" cy="10" r="4.500" fill="#eee" /><path d="M8.500 10l1.500 2l3-3.500" stroke="#333" /></Svg>
      <Svg w={17} h={14} className="ml-[7px] mt-2"><path d="M.5 4.500h3l3-3v11l-3-3h-3z" stroke="#eee" /><path d="M9 5Q10.500 7 9 9M11 3Q14 7 11 11" stroke="#ccc" /><path d="M13.500 1Q17.500 7 13.500 13" stroke="#777" /></Svg>
      <Svg w={17} h={14} className="ml-[7px] mt-[9px]"><path d="M5 1.500h10.500v8H4.500V5M10 10v3M6 13.500h8" stroke="#eee" /><path d="M.5.5h4v3h-4zM2.500 4v9" stroke="#eee" /></Svg>
      <T w={27} className="ml-2.5 font-['Open_Sans','Noto_Sans',sans-serif] text-xs leading-[30px] text-white">14:22</T>
      <Svg w={16} h={17} className="ml-[17px] mt-[7px]"><path d="M.5.500h15v13h-5L8 16l-2.500-2.500h-5z" stroke="#fff" /></Svg>
      <div className="ml-[19px] h-[30px] w-px bg-[#555]" />
    </div>
  );
}

export default function App() {
  return (
    <div className={`flex h-[768px] w-[1366px] flex-col overflow-hidden bg-[#f0f0f0] ${UI}`}>
      <TitleBar />
      <MenuBar />
      <Ribbon />
      <TabStrip />
      <Workspace />
      <StatusBar />
      <TaskBar />
    </div>
  );
}
